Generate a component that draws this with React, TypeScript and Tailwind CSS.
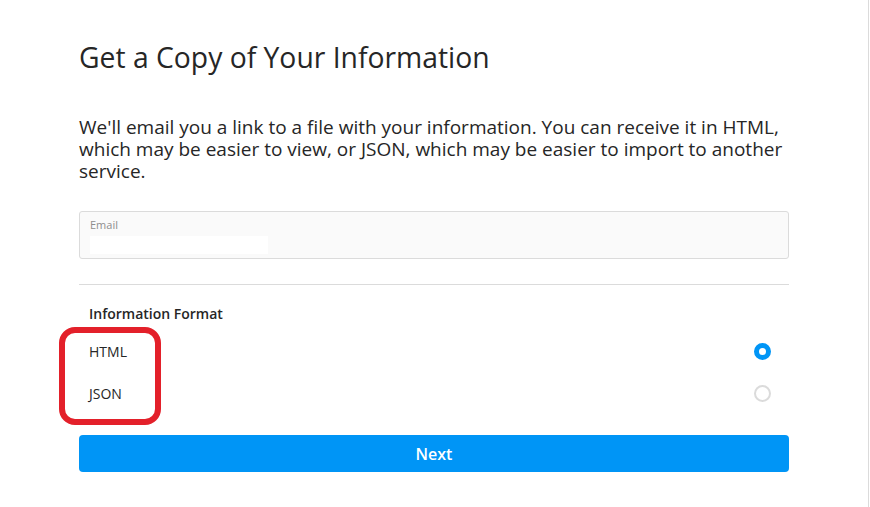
import { useState } from "react";

type FormatType = "HTML" | "JSON";

const formats: FormatType[] = ["HTML", "JSON"];

const App: React.FC = () => {
  const [format, setFormat] = useState<FormatType>("HTML");

  return (
    <div
      className="relative w-[869px] min-h-[507px] bg-white border-r border-r-[#dbdbdb] text-[#262626]"
      style={{ fontFamily: '"Open Sans", "Noto Sans", sans-serif' }}
    >
      <div className="w-[710px] ml-[79px] pt-[37px] flex flex-col">
        <h1 className="text-[28.3px] leading-[40px] text-[#262626]">
          Get a Copy of Your Information
        </h1>

        <p className="mt-[39px] text-[19px] leading-[22px] text-[#262626]">
          We'll email you a link to a file with your information. You can
          receive it in HTML, which may be easier to view, or JSON, which may
          be easier to import to another service.
        </p>

        <div className="mt-[29px] h-[48px] bg-[#fafafa] border border-[#dbdbdb] rounded-[3px] px-[10px] pt-[6px]">
          <p className="text-[11px] leading-[14px] text-[#8e8e8e]">Email</p>
          <div className="mt-[4px] w-[178px] h-[18px] bg-white" />
        </div>

        <div className="mt-[25px] h-px bg-[#dbdbdb]" />

        <p className="mt-[20px] px-[10px] text-[14px] leading-[18px] font-semibold text-[#262626]">
          Information Format
        </p>

        <div className="mt-[7px] flex flex-col">
          {formats.map((item) => (
            <button
              key={item}
              type="button"
              onClick={() => setFormat(item)}
              className="h-[42px] flex items-center justify-between pl-[10px] pr-[18px] cursor-pointer"
            >
              <span className="text-[14px] text-[#262626]">{item}</span>
              {format === item ? (
                <span className="w-[17px] h-[17px] rounded-full border-[5px] border-[#0095f6] bg-white" />
              ) : (
                <span className="w-[17px] h-[17px] rounded-full border-2 border-[#dbdbdb] bg-white" />
              )}
            </button>
          ))}
        </div>

        <button
          type="button"
          className="mt-[21px] h-[37px] w-full rounded-[4px] bg-[#0095f6] text-white text-[16px] font-semibold"
        >
          Next
        </button>
      </div>

      {/* red annotation box around the format labels */}
      <div className="absolute left-[59px] top-[327px] w-[102px] h-[98px] border-[6px] border-[#e3202a] rounded-[16px] pointer-events-none" />
    </div>
  );
};

export default App;
